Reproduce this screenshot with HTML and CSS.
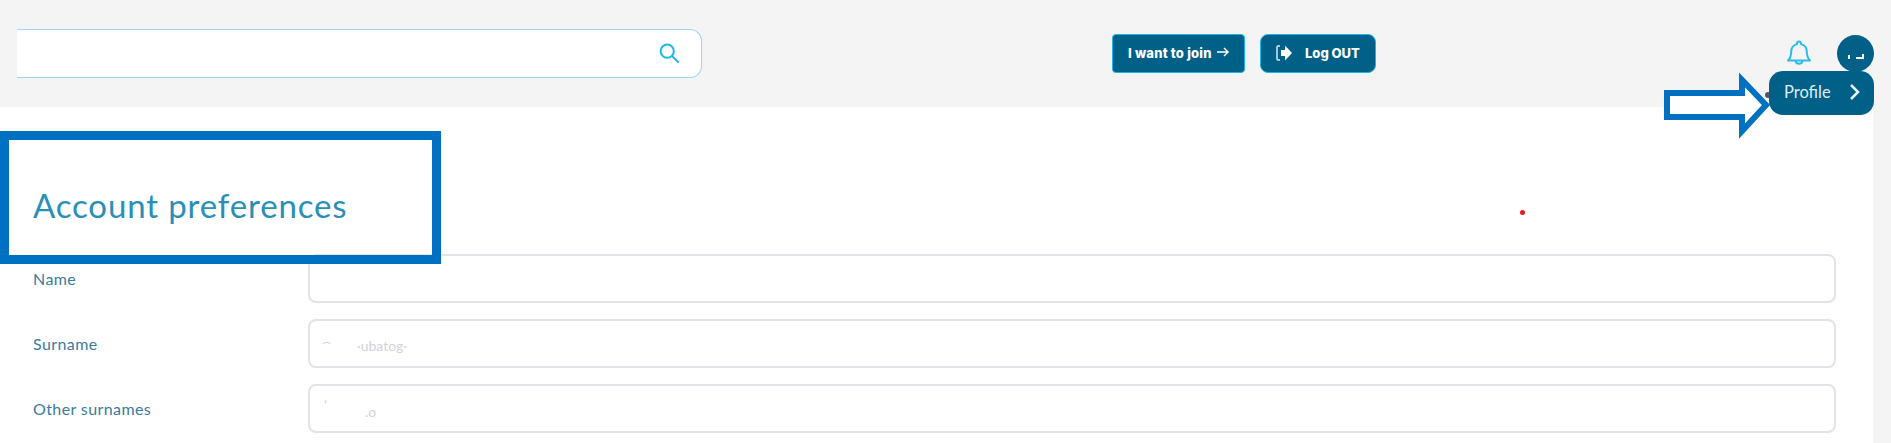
FILE: index.html
```html
<!DOCTYPE html>
<html lang="en">
<head>
<meta charset="utf-8">
<title>Account preferences</title>
<link rel="stylesheet" href="styles.css">
</head>
<body>
<div class="page">
  <header class="topbar">
    <div class="search">
      <svg class="search-icon" viewBox="0 0 20 20" width="20" height="20"><circle cx="8.2" cy="8.2" r="6.6"/><path d="M13 13l6 6"/></svg>
    </div>
    <div class="actions">
      <a class="btn btn-join">I want to join
        <svg viewBox="0 0 14 12" width="14" height="12"><path d="M1 6h11M8 2l4 4-4 4"/></svg>
      </a>
      <a class="btn btn-logout">
        <svg viewBox="0 0 18 18" width="18" height="18"><path class="bracket" d="M5 2H3a1 1 0 0 0-1 1v12a1 1 0 0 0 1 1h2"/><path class="solid" d="M6 6h4V1.500l7 7.500-7 7.500V12H6z"/></svg>
        Log OUT
      </a>
    </div>
    <div class="user">
      <svg class="bell" viewBox="0 0 26 28" width="26" height="28"><path d="M13 2.5a2 2 0 0 1 2 2v.6c3.8 1 5.8 4 5.8 7.6 0 4 .8 6.200 3.200 8.800H2c2.400-2.600 3.200-4.800 3.200-8.800 0-3.600 2-6.600 5.800-7.600v-.6a2 2 0 0 1 2-2z"/><path d="M9.500 22a3.600 3.600 0 0 0 7 0"/></svg>
      <div class="avatar"><span class="avatar-a"></span><span class="avatar-b"></span></div>
    </div>
  </header>
  <main class="content">
    <h1 class="title">Account preferences</h1>
    <form class="form">
      <div class="row"><label class="label">Name</label><div class="field"></div></div>
      <div class="row"><label class="label">Surname</label><div class="field"><span class="ghost ghost-a">⌢</span><span class="ghost ghost-b">·ubatog·</span></div></div>
      <div class="row"><label class="label">Other surnames</label><div class="field"><span class="ghost ghost-c">‘</span><span class="ghost ghost-d">.o</span></div></div>
    </form>
  </main>
  <div class="highlight"></div>
  <svg class="callout" viewBox="0 0 115 72" width="115" height="72"><path d="M7 23H82V10L106 35 82 61V47H7Z"/></svg>
  <span class="notch"></span>
  <a class="profile">Profile
    <svg viewBox="0 0 12 18" width="12" height="18"><path d="M2 2l7 7-7 7"/></svg>
  </a>
  <span class="dot"></span>
</div>
</body>
</html>
```
FILE: styles.css
```css
* { box-sizing: border-box; }
html, body { margin: 0; height: 443px; }
body { background: #f4f4f4; overflow: hidden; font-family: "Lato", "Open Sans", sans-serif; }
.page { position: relative; width: 1891px; height: 443px; overflow: hidden; display: flex; flex-direction: column; }

.topbar { height: 107px; margin-left: 17px; padding: 0 17px 1px 0; background: #f4f4f4; display: flex; align-items: center; flex: none; }
.search { width: 685px; height: 49px; background: #fff; border: 1px solid #9ad6ef; border-left: 0; border-radius: 0 12px 12px 0; display: flex; align-items: center; justify-content: flex-end; padding-right: 22px; }
.search-icon { fill: none; stroke: #1db8ea; stroke-width: 2; stroke-linecap: round; }
.actions { display: flex; gap: 15px; margin-left: 410px; }
.btn { height: 39px; display: flex; align-items: center; background: #006088; border: 1.500px solid #19b5e8; color: #fff; font-family: "Inter", sans-serif; font-weight: 800; font-size: 13px; }
.btn-join { width: 133px; border-radius: 4px; padding-left: 15px; gap: 4px; letter-spacing: .2px; }
.btn-join svg { fill: none; stroke: #fff; stroke-width: 1.500; margin-top: -2px; }
.btn-logout { width: 116px; border-radius: 8px; padding-left: 14px; gap: 12px; }
.btn-logout .bracket { fill: none; stroke: #cfeaf5; stroke-width: 1.500; }
.btn-logout .solid { fill: #fff; }
.user { margin-left: auto; display: flex; align-items: center; gap: 25px; }
.bell { fill: none; stroke: #28bdee; stroke-width: 2; stroke-linejoin: round; }
.avatar { position: relative; width: 37px; height: 37px; border-radius: 50%; background: #006088; }
.avatar-a { position: absolute; left: 11px; top: 20px; width: 2px; height: 4px; background: #fff; }
.avatar-b { position: absolute; left: 19px; top: 19px; width: 8px; height: 5px; border: solid #fff; border-width: 0 2px 2px 0; }

.content { flex: 1; margin-right: 18px; background: #fff; padding: 0 37px 0 33px; }
.title { margin: 0; padding-top: 78px; height: 147px; font-weight: 400; font-size: 33px; line-height: 40px; color: #2a8fb5; letter-spacing: .85px; }
.form { display: flex; flex-direction: column; gap: 16px; }
.row { display: flex; align-items: center; }
.label { width: 275px; flex: none; font-size: 16px; color: #3a7b9e; letter-spacing: .4px; }
.field { position: relative; flex: 1; height: 49px; background: #fff; border: 2px solid #e3e3e8; border-radius: 8px; }
.ghost { position: absolute; color: #d2d2d8; font-size: 14px; line-height: 16px; }
.ghost-a { left: 12px; top: 12px; }
.ghost-b { left: 47px; top: 17px; }
.ghost-c { left: 14px; top: 11px; }
.ghost-d { left: 55px; top: 18px; }

.highlight { position: absolute; left: 0; top: 131px; width: 441px; height: 133px; border: 9px solid #0070c0; }
.callout { position: absolute; left: 1660px; top: 70px; fill: #fff; stroke: #0070c0; stroke-width: 6; }
.notch { position: absolute; left: 1765px; top: 92px; width: 6px; height: 6px; border-radius: 50%; background: #4a5a63; }
.profile { position: absolute; left: 1769px; top: 71px; width: 105px; height: 44px; padding: 0 13px 2px 15px; border-radius: 14px; background: #006088; color: #dfeef5; font-size: 16.500px; display: flex; align-items: center; justify-content: space-between; }
.profile svg { fill: none; stroke: #e9f3f8; stroke-width: 2.500; }
.dot { position: absolute; left: 1520px; top: 210px; width: 5px; height: 5px; border-radius: 50%; background: #e01b24; }
```
